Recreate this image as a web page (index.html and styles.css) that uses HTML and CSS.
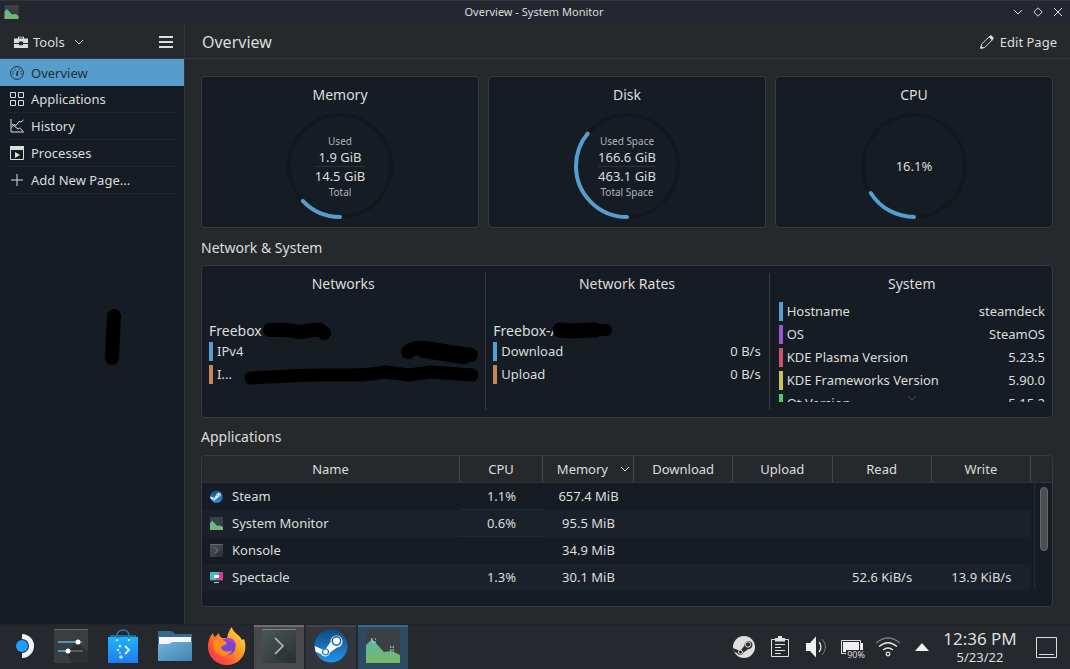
FILE: index.html
```
<!DOCTYPE html>
<html lang="en">
<head>
    <meta charset="UTF-8">
    <meta name="viewport" content="width=device-width, initial-scale=1.0">
    <title>Overview - System Monitor</title>
    <link rel="stylesheet" href="styles.css">
</head>
<body>
    <!-- shared icons -->
    <svg class="defs" width="0" height="0" aria-hidden="true">
        <defs>
            <linearGradient id="gDark" x1="0" y1="0" x2="1" y2="1">
                <stop offset="0" stop-color="#4b5759"/><stop offset="1" stop-color="#2c3134"/>
            </linearGradient>
            <linearGradient id="gGreen" x1="0" y1="0" x2="0" y2="1">
                <stop offset="0" stop-color="#5fb5ab"/><stop offset="1" stop-color="#78b866"/>
            </linearGradient>
            <linearGradient id="gSteam" x1="0" y1="0" x2="0" y2="1">
                <stop offset="0" stop-color="#0f4a82"/><stop offset="1" stop-color="#2196ea"/>
            </linearGradient>
            <linearGradient id="gBag" x1="0" y1="0" x2="0" y2="1">
                <stop offset="0" stop-color="#20b3f6"/><stop offset="1" stop-color="#1f7cf2"/>
            </linearGradient>
            <linearGradient id="gFolder" x1="0" y1="0" x2="1" y2="1">
                <stop offset="0" stop-color="#71b4dc"/><stop offset="1" stop-color="#4283b0"/>
            </linearGradient>
            <linearGradient id="gFox" x1="1" y1="0" x2="0" y2="1">
                <stop offset="0" stop-color="#fff04a"/><stop offset=".4" stop-color="#ff9a22"/><stop offset=".75" stop-color="#ff4a3c"/><stop offset="1" stop-color="#f0207c"/>
            </linearGradient>
            <symbol id="monitor" viewBox="0 0 34 34">
                <path d="M0 0h34v34H0z" fill="#3a4044"/>
                <path d="M0 34V16l6-6 12 13 8-1 8 4v8z" fill="url(#gGreen)"/>
            </symbol>
            <symbol id="konsole" viewBox="0 0 34 34">
                <path d="M0 0h34v34H0z" fill="url(#gDark)"/>
                <path d="M0 0h34v1H0z" fill="#7b8485"/>
                <path d="M22 17l12 12v5H20l-6-7z" fill="#2a2f32" opacity=".5"/>
                <path d="M13 9l8 8-8 8" fill="none" stroke="#b9bdbe" stroke-width="1.6"/>
            </symbol>
            <symbol id="steam" viewBox="0 0 34 34">
                <circle cx="17" cy="17" r="16.5" fill="url(#gSteam)"/>
                <path d="M.6 17l8 3.500 3-.5 5-7A6 6 0 1 1 23 18.500l-7 5A5 5 0 0 1 6.800 25L1.500 22.500z" fill="#fff"/>
                <circle cx="22.500" cy="12" r="4.200" fill="#fff" stroke="#185f9f" stroke-width="1.500"/>
                <circle cx="11.500" cy="23" r="3" fill="none" stroke="#1b76c0" stroke-width="1.200"/>
            </symbol>
            <symbol id="chevron" viewBox="0 0 10 10">
                <path d="M1 3l4 4 4-4" fill="none" stroke="currentColor"/>
            </symbol>
        </defs>
    </svg>

    <header class="titlebar">
        <svg class="app-icon"><use href="#monitor"/></svg>
        <h1>Overview - System Monitor</h1>
        <div class="window-buttons">
            <button aria-label="Minimize"><svg width="10" height="10"><use href="#chevron"/></svg></button>
            <button aria-label="Maximize"><svg width="10" height="10" viewBox="0 0 10 10"><path d="M5 .8L9.200 5 5 9.200.8 5z" fill="none" stroke="currentColor"/></svg></button>
            <button aria-label="Close"><svg width="10" height="10" viewBox="0 0 10 10"><path d="M1 1l8 8M9 1L1 9" fill="none" stroke="currentColor"/></svg></button>
        </div>
    </header>

    <div class="window">
        <aside class="sidebar">
            <div class="toolbar">
                <button class="tools">
                    <svg width="14" height="12" viewBox="0 0 14 12"><path d="M4 3V.7h6V3M0 2.500h14V7H9V5.500H5V7H0zM0 8h5v1.200h4V8h5v4H0z" fill="currentColor"/><path d="M5 2.500v-1h4v1z" fill="#26282c"/></svg>
                    Tools
                    <svg width="10" height="10"><use href="#chevron"/></svg>
                </button>
                <button class="menu" aria-label="Menu">
                    <svg width="14" height="12" viewBox="0 0 14 12"><path d="M0 1h14M0 6h14M0 11h14" stroke="currentColor" stroke-width="2"/></svg>
                </button>
            </div>
            <nav>
                <a href="#" class="current">
                    <svg width="14" height="14" viewBox="0 0 14 14" fill="none" stroke="currentColor"><circle cx="7" cy="7" r="6.400"/><path d="M3.200 9A4.200 4.200 0 0 1 6 3.300M8.500 3.200A4.200 4.200 0 0 1 10.800 9" stroke-dasharray="1.500 1"/><path d="M7.600 5l-.8 5" stroke-width="1.600"/></svg>
                    Overview
                </a>
                <a href="#">
                    <svg width="14" height="14" viewBox="0 0 14 14" fill="none" stroke="currentColor"><path d="M.5.5h5v5h-5zM8.500.5h5v5h-5zM.5 8.500h5v5h-5zM8.500 8.500h5v5h-5z"/></svg>
                    Applications
                </a>
                <a href="#">
                    <svg width="14" height="14" viewBox="0 0 14 14" fill="none" stroke="currentColor"><path d="M1 0v13h13M1.500 8.500L4 5.500l2 1 3-4 2 .5 2.500-2M2 5l6 5 1.500-1 3.500 3"/></svg>
                    History
                </a>
                <a href="#">
                    <svg width="14" height="14" viewBox="0 0 14 14" fill="none" stroke="currentColor"><path d="M.5.5h13v13H.5z"/><path d="M0 0h14v4H0zM5 6l5 3-5 3z" fill="currentColor" stroke="none"/></svg>
                    Processes
                </a>
                <a href="#">
                    <svg width="14" height="14" viewBox="0 0 14 14" stroke="currentColor"><path d="M7 1v12M1 7h12"/></svg>
                    Add New Page...
                </a>
            </nav>
            <svg class="mark mark-side" width="18" height="58" viewBox="0 0 18 58"><path d="M10 8L8 50" stroke="#000" stroke-width="14" stroke-linecap="round"/></svg>
        </aside>

        <main>
            <div class="toolbar">
                <h2>Overview</h2>
                <button class="edit">
                    <svg width="14" height="14" viewBox="0 0 14 14"><path d="M.7 13.300l.8-4L9.300 1.500l3.200 3.200-7.800 7.800z" fill="none" stroke="currentColor"/><path d="M8.800 2L11 0l3 3-2 2.200zM.5 13.500l.6-3 2.400 2.400z" fill="currentColor"/></svg>
                    Edit Page
                </button>
            </div>

            <div class="page">
                <section class="gauges">
                    <article class="card gauge-card">
                        <h3>Memory</h3>
                        <div class="gauge">
                            <svg viewBox="0 0 106 106"><circle class="track" cx="53" cy="53" r="51"/><circle class="value" cx="53" cy="53" r="51" pathLength="100" stroke-dasharray="13 100"/></svg>
                            <div class="readout">
                                <small>Used</small>
                                <span class="top">1.9 GiB</span>
                                <span>14.5 GiB</span>
                                <small>Total</small>
                            </div>
                        </div>
                    </article>
                    <article class="card gauge-card">
                        <h3>Disk</h3>
                        <div class="gauge">
                            <svg viewBox="0 0 106 106"><circle class="track" cx="53" cy="53" r="51"/><circle class="value" cx="53" cy="53" r="51" pathLength="100" stroke-dasharray="36 100"/></svg>
                            <div class="readout">
                                <small>Used Space</small>
                                <span class="top">166.6 GiB</span>
                                <span>463.1 GiB</span>
                                <small>Total Space</small>
                            </div>
                        </div>
                    </article>
                    <article class="card gauge-card">
                        <h3>CPU</h3>
                        <div class="gauge">
                            <svg viewBox="0 0 106 106"><circle class="track" cx="53" cy="53" r="51"/><circle class="value" cx="53" cy="53" r="51" pathLength="100" stroke-dasharray="16.100 100"/></svg>
                            <div class="readout"><span>16.1%</span></div>
                        </div>
                    </article>
                </section>

                <h3 class="section-title">Network &amp; System</h3>
                <section class="card network">
                    <article>
                        <h3>Networks</h3>
                        <div class="list centered">
                            <h4>Freebox</h4>
                            <div class="row blue"><span>IPv4</span></div>
                            <div class="row orange"><span>I...</span></div>
                            <svg class="mark mark-networks" width="272" height="72" viewBox="0 0 272 72" fill="none" stroke="#000" stroke-linecap="round" stroke-linejoin="round">
                                <path d="M61 14l16 0 14 2 14-2 6 0 4 3" stroke-width="14"/>
                                <path d="M199 36q6-5 18-4l24 4 21 3" stroke-width="14"/>
                                <path d="M215 34l40 6" stroke-width="16"/>
                                <path d="M42 62q30-2 66-3h34q18 0 34-3l24 3 22-3 41 3" stroke-width="13"/>
                            </svg>
                        </div>
                    </article>
                    <article>
                        <h3>Network Rates</h3>
                        <div class="list centered">
                            <h4>Freebox-A</h4>
                            <div class="row blue"><span>Download</span><span>0 B/s</span></div>
                            <div class="row orange"><span>Upload</span><span>0 B/s</span></div>
                            <svg class="mark mark-rates" width="128" height="24" viewBox="0 0 128 24" fill="none" stroke="#000" stroke-linecap="round" stroke-linejoin="round">
                                <path d="M66 12h47" stroke-width="12"/>
                                <path d="M67 12l11 1 24-1" stroke-width="15"/>
                            </svg>
                        </div>
                    </article>
                    <article>
                        <h3>System</h3>
                        <div class="list">
                            <div class="row blue"><span>Hostname</span><span>steamdeck</span></div>
                            <div class="row purple"><span>OS</span><span>SteamOS</span></div>
                            <div class="row red"><span>KDE Plasma Version</span><span>5.23.5</span></div>
                            <div class="row yellow"><span>KDE Frameworks Version</span><span>5.90.0</span></div>
                            <div class="row green"><span>Qt Version</span><span>5.15.2</span></div>
                            <svg class="more" width="10" height="10"><use href="#chevron"/></svg>
                        </div>
                    </article>
                </section>

                <h3 class="section-title">Applications</h3>
                <section class="card apps">
                    <table>
                        <colgroup>
                            <col class="c-name"><col class="c-cpu"><col class="c-mem"><col><col><col><col><col class="c-bar">
                        </colgroup>
                        <thead>
                            <tr>
                                <th>Name</th>
                                <th>CPU</th>
                                <th class="sorted"><span>Memory <svg width="10" height="10"><use href="#chevron"/></svg></span></th>
                                <th>Download</th>
                                <th>Upload</th>
                                <th>Read</th>
                                <th>Write</th>
                                <th></th>
                            </tr>
                        </thead>
                        <tbody>
                            <tr>
                                <td><span class="app"><svg><use href="#steam"/></svg>Steam</span></td>
                                <td class="load">1.1%</td><td>657.4 MiB</td><td></td><td></td><td></td><td></td>
                                <td class="bar" rowspan="4"><div class="scroll"><div class="thumb"></div></div></td>
                            </tr>
                            <tr>
                                <td><span class="app"><svg><use href="#monitor"/></svg>System Monitor</span></td>
                                <td class="load">0.6%</td><td>95.5 MiB</td><td></td><td></td><td></td><td></td>
                            </tr>
                            <tr>
                                <td><span class="app"><svg><use href="#konsole"/></svg>Konsole</span></td>
                                <td></td><td>34.9 MiB</td><td></td><td></td><td></td><td></td>
                            </tr>
                            <tr>
                                <td><span class="app"><svg viewBox="0 0 13 13"><path d="M0 1h13v8H0z" fill="#45b9bd"/><path d="M13 1v8H6l3-8z" fill="#d63c91"/><path d="M4 4h5v3H4z" fill="#fff"/><path d="M0 9h13v1H0z" fill="#444b50"/><path d="M4 11h5v1H4z" fill="#c8cccc"/></svg>Spectacle</span></td>
                                <td>1.3%</td><td>30.1 MiB</td><td></td><td></td><td>52.6 KiB/s</td><td>13.9 KiB/s</td>
                            </tr>
                        </tbody>
                    </table>
                </section>
            </div>
        </main>
    </div>

    <footer class="taskbar">
        <div class="tasks">
            <button class="launcher" aria-label="Application Launcher">
                <svg width="18" height="24" viewBox="0 0 18 24"><path d="M6 0a12 12 0 0 1 0 24v-5a7 7 0 0 0 0-14z" fill="#f4f4f4"/><circle cx="6" cy="12" r="6" fill="#1a9fff"/></svg>
            </button>
            <button aria-label="System Settings">
                <svg width="34" height="34" viewBox="0 0 34 34"><path d="M0 0h34v34H0z" fill="#3b3e41"/><path d="M0 0h34v1H0z" fill="#686b6e"/><path d="M24 14l10 9v11H18l-6-12z" fill="#2c2f32"/><path d="M4 13h25M4 22h25" stroke="#65696b" stroke-width="1.500"/><path d="M4 13h19M4 22h9" stroke="#5aa7d4" stroke-width="1.500"/><circle cx="24" cy="13" r="2.500" fill="#fff"/><circle cx="14" cy="22" r="2.500" fill="#fff"/></svg>
            </button>
            <button aria-label="Discover">
                <svg width="32" height="34" viewBox="0 0 32 34"><path d="M3 6h26v5H3z" fill="#1a6c9c"/><path d="M1 8h30v26H1z" fill="url(#gBag)"/><path d="M10 11V6a6 5 0 0 1 12 0v5" fill="none" stroke="#207fae" stroke-width="1.500"/><g fill="#b9e4ff"><circle cx="10" cy="11" r="1.200"/><circle cx="22" cy="11" r="1.200"/><circle cx="13" cy="17" r="1.500"/><circle cx="11" cy="21" r="1.200"/><circle cx="14" cy="28" r="1.800"/><circle cx="13" cy="24" r="1"/></g><path d="M18 17l4 4-4 4" fill="none" stroke="#d9f3ff" stroke-width="2"/></svg>
            </button>
            <button aria-label="File Manager">
                <svg width="34" height="32" viewBox="0 0 34 32"><path d="M0 1h14l3 3h17v10H0z" fill="#35698d"/><path d="M1 7h32v9H1z" fill="#f7f7f7"/><path d="M0 14h11l3-2h20v19H0z" fill="url(#gFolder)"/></svg>
            </button>
            <button aria-label="Firefox">
                <svg width="38" height="38" viewBox="0 0 38 38"><path d="M19 38C8 38 0 30 0 20 0 14 2 9 5 6c0 2 1 3 2 4l4-4c0 3 2 5 5 5h3l1-4c1-3 2-5 4-7 0 5 8 8 10 13l2-1c5 14-4 26-17 26z" fill="url(#gFox)"/><circle cx="19" cy="20" r="8.500" fill="#7b40d8"/><path d="M17 12c6-3 12 2 11 8-1-3-3-4-6-5z" fill="#a83fd8"/><path d="M5 15c5-4 9-3 13 0l1 1c-1 3-6 2-6 5 1 3 7 5 11 2-2 7-12 8-17 1-2-3-2-6-2-9z" fill="#ff8b20"/></svg>
            </button>
            <button class="active" aria-label="Konsole">
                <svg width="34" height="34"><use href="#konsole"/></svg>
            </button>
            <button class="open" aria-label="Steam">
                <svg width="34" height="34"><use href="#steam"/></svg>
            </button>
            <button class="focused" aria-label="System Monitor">
                <svg width="34" height="34" viewBox="0 0 34 34"><use href="#monitor"/><path d="M5 10h2m2 0h1M6 13h4M24 18h5M24 21h5" stroke="#e8f4ef" stroke-width="1.200" stroke-dasharray="1.500 1"/></svg>
            </button>
        </div>
        <div class="tray">
            <button aria-label="Steam">
                <svg width="22" height="22" viewBox="0 0 22 22"><circle cx="11" cy="11" r="11" fill="#dedede"/><path d="M0 12l6 2.500 2-.5 3.500-4.500a4 4 0 1 1 4 3.500l-5 3.500A3.500 3.500 0 0 1 4 17l-3.400-1.500z" fill="#292c30"/><circle cx="15" cy="8.500" r="2.700" fill="none" stroke="#dedede"/><circle cx="7.500" cy="16" r="2" fill="none" stroke="#dedede"/></svg>
            </button>
            <button aria-label="Clipboard">
                <svg width="18" height="22" viewBox="0 0 18 22" fill="none" stroke="#e0e0e0"><path d="M.5 3.500h17v17H.5z"/><path d="M4 8.500h10M4 11.500h6M4 14.500h10M4 17.500h6"/><path d="M4 2h3V0h4v2h3v3.500H4z" fill="#e0e0e0" stroke="none"/></svg>
            </button>
            <button aria-label="Volume">
                <svg width="22" height="22" viewBox="0 0 22 22" fill="none"><path d="M1 7h4l6-6.500v21L5 15H1z" fill="#f0f0f0"/><path d="M14 6q4 5 0 10" stroke="#e0e0e0" stroke-width="1.300"/><path d="M17 3q7 8 0 16" stroke="#777a7d"/></svg>
            </button>
            <button class="battery" aria-label="Battery">
                <svg width="22" height="16" viewBox="0 0 22 16"><path d="M.5 1.500h19v13H.5z" fill="none" stroke="#e0e0e0"/><path d="M2 3h16v10H2zM20 4h2v8h-2z" fill="#f0f0f0"/></svg>
                <span>90%</span>
            </button>
            <button aria-label="Network">
                <svg width="26" height="20" viewBox="0 0 26 20" fill="none" stroke="#e0e0e0" stroke-width="1.300"><path d="M1 6Q13-4 25 6" stroke="#74777a"/><path d="M4 9.500q9-7.500 18 0M8 13q5-4 10 0"/><circle cx="13" cy="17" r="1.800"/></svg>
            </button>
            <button class="caret" aria-label="Show hidden icons">
                <svg width="14" height="8" viewBox="0 0 14 8"><path d="M7 0l7 8H0z" fill="#f2f2f2"/></svg>
            </button>
            <button class="clock"><time>12:36 PM</time><time class="date">5/23/22</time></button>
            <button class="desktop" aria-label="Show Desktop">
                <svg width="21" height="21" viewBox="0 0 21 21" fill="none" stroke="#dcdcdc"><path d="M.5.5h20v20H.5zM3 17.500h15"/></svg>
            </button>
        </div>
    </footer>
</body>
</html>
```
FILE: styles.css
```
* {
    box-sizing: border-box;
}

body {
    margin: 0;
    min-height: 100vh;
    display: flex;
    flex-direction: column;
    font-family: "Noto Sans", sans-serif;
    font-size: 13px;
    line-height: 18px;
    color: #dcdddd;
    background-color: #26292c;
}

h1, h2, h3, h4 {
    margin: 0;
    font-weight: normal;
}

h3, h4 {
    font-size: 14px;
    line-height: 20px;
}

button {
    display: flex;
    align-items: center;
    justify-content: center;
    padding: 0;
    border: none;
    background: none;
    color: inherit;
    font: inherit;
}

svg {
    display: block;
    flex: none;
}

.defs {
    position: absolute;
}

/* title bar */
.titlebar {
    display: grid;
    grid-template-columns: 1fr auto 1fr;
    align-items: center;
    height: 24px;
    padding: 0 6px 2px 4px;
    background-color: #252730;
    border-top: 1px solid #32353e;
}

.titlebar h1 {
    font-size: 11px;
    line-height: 16px;
}

.app-icon {
    width: 15px;
    height: 14px;
}

.window-buttons {
    display: flex;
    justify-content: flex-end;
    gap: 8px;
}

.window-buttons button {
    width: 12px;
    height: 12px;
}

.window {
    flex: 1;
    display: flex;
}

.toolbar {
    display: flex;
    align-items: center;
    justify-content: space-between;
    height: 35px;
    padding-top: 2px;
    border-bottom: 1px solid #34373b;
}

/* sidebar */
.sidebar {
    position: relative;
    width: 185px;
    flex: none;
    background-color: #161c23;
    border-right: 1px solid #303439;
}

.sidebar .toolbar {
    padding-left: 14px;
    padding-right: 11px;
    background-color: #26292c;
}

.tools {
    gap: 5px;
}

.tools svg:last-child {
    margin-left: 4px;
}

nav a {
    display: flex;
    align-items: center;
    gap: 7px;
    height: 27px;
    margin: 0 8px;
    padding-left: 2px;
    color: inherit;
    text-decoration: none;
    border-bottom: 1px solid #1f252d;
}

nav .current {
    margin: 0;
    padding-left: 10px;
    color: #1d2e3a;
    background-color: #569dcc;
    border-bottom: none;
}

/* main area */
main {
    flex: 1;
    min-width: 0;
    display: flex;
    flex-direction: column;
}

main .toolbar {
    padding-left: 17px;
    padding-right: 13px;
}

h2 {
    font-size: 16px;
    line-height: 22px;
}

.edit {
    gap: 6px;
}

.page {
    flex: 1;
    display: grid;
    grid-template-rows: 1fr 37px 1fr 37px 1fr;
    padding: 17px 17px 17px 16px;
}

.card {
    background-color: #161c23;
    border: 1px solid #373b40;
    border-radius: 4px;
}

.card h3 {
    text-align: center;
}

.section-title {
    align-self: center;
    padding-top: 2px;
}

.gauges {
    display: grid;
    grid-template-columns: repeat(3, 1fr);
    gap: 9px;
}

.gauge-card {
    padding-top: 8px;
}

.gauge {
    display: grid;
    place-items: center;
    margin-top: 8px;
}

.gauge > * {
    grid-area: 1 / 1;
}

.gauge svg {
    width: 106px;
}

.gauge circle {
    fill: none;
    stroke-width: 4;
}

.gauge .track {
    stroke: #12171e;
}

.gauge .value {
    stroke: #559ecf;
    stroke-linecap: round;
    transform: rotate(90deg);
    transform-origin: center;
}

.readout {
    display: flex;
    flex-direction: column;
    text-align: center;
}

.readout small {
    font-size: 10px;
    line-height: 14px;
    color: #b0b3b6;
}

.readout .top {
    border-bottom: 1px solid #2c3239;
}

/* network and system */
.network {
    display: grid;
    grid-template-columns: repeat(3, 1fr);
    padding: 7px 0;
}

.network article {
    display: flex;
    flex-direction: column;
    padding: 1px 8px 8px 7px;
}

.network article + article {
    border-left: 1px solid #373b40;
}

.network article:last-child {
    padding-left: 9px;
    padding-right: 7px;
}

.list {
    position: relative;
    flex: 1 0 100px;
    height: 100px;
    margin-top: 6px;
    overflow: hidden;
}

.list h4 {
    line-height: 23px;
}

.row {
    display: flex;
    justify-content: space-between;
    height: 19px;
    margin: 2px 0 4px;
    padding-left: 4px;
    border-left: 4px solid;
}

.row + .row {
    margin-top: 0;
}

.centered {
    display: flex;
    flex-direction: column;
    justify-content: center;
    padding-top: 6px;
    overflow: visible;
}

.centered .row {
    margin-top: 0;
}

.row span {
    color: #dcdddd;
}

.blue { border-color: #559ecf; }
.orange { border-color: #cc8557; }
.purple { border-color: #9955cf; }
.red { border-color: #cb5470; }
.yellow { border-color: #c8c555; }
.green { border-color: #55c96b; }

.more {
    position: absolute;
    bottom: -1px;
    left: 50%;
    margin-left: -5px;
    color: #474d53;
}

/* scribbles over private values */
.mark {
    position: absolute;
}

.mark-side {
    left: 104px;
    top: 284px;
}

.mark-networks {
    left: 0;
    top: 16px;
}

.mark-rates {
    left: 0;
    top: 18px;
}

/* applications table */
.apps {
    overflow: hidden;
}

table {
    width: 100%;
    table-layout: fixed;
    border-collapse: separate;
    border-spacing: 0;
}

.c-name { width: 258px; }
.c-cpu { width: 83px; }
.c-mem { width: 91px; }
.c-bar { width: 21px; }

th, td {
    height: 27px;
    padding: 0;
    text-align: center;
    font-weight: normal;
}

th {
    background-color: #26292c;
    border-right: 1px solid #43474b;
    border-bottom: 1px solid #2f3337;
}

th:last-child {
    border-right: none;
}

.sorted span {
    display: flex;
    align-items: center;
    justify-content: flex-end;
    gap: 12px;
    padding-right: 3px;
}

tbody tr:nth-child(even) td {
    background-color: #1b212a;
}

tbody .load {
    border-bottom: 1px solid #1d2b38;
}

.app {
    display: flex;
    align-items: center;
    gap: 9px;
    padding-left: 8px;
}

.app svg {
    width: 13px;
    height: 13px;
}

.bar {
    vertical-align: top;
}

.scroll {
    height: 106px;
    margin-left: 3px;
    padding: 4px 4px 0 5px;
    border-left: 1px solid #252b32;
}

.thumb {
    width: 8px;
    height: 64px;
    border: 1px solid #66686b;
    border-radius: 4px;
    background-color: #4c4e51;
}

/* taskbar */
.taskbar {
    display: flex;
    justify-content: space-between;
    height: 45px;
    background-color: #25282d;
    border-top: 1px solid #202328;
}

.tasks, .tray {
    display: flex;
}

.tasks {
    gap: 2px;
}

.tasks button {
    width: 50px;
    padding-bottom: 4px;
    border-top: 2px solid transparent;
}

.tasks .launcher {
    width: 44px;
    padding-left: 6px;
}

.tasks .active {
    background-color: #47494d;
    border-color: #6c6e71;
}

.tasks .open {
    background-color: #32353b;
    border-color: #404348;
}

.tasks .focused {
    background-color: #2c4a60;
    border-color: #316a8c;
}

.tray button {
    width: 36px;
}

.battery {
    position: relative;
}

.battery span {
    position: absolute;
    right: 4px;
    bottom: 9px;
    padding: 0 1px;
    font-size: 9px;
    line-height: 10px;
    background-color: #25282d;
}

.tray .caret {
    width: 32px;
}

.tray .clock {
    width: 84px;
    flex-direction: column;
    font-size: 17px;
    line-height: 20px;
}

.clock .date {
    font-size: 13px;
    line-height: 16px;
}

.tray .desktop {
    width: 48px;
}
```
